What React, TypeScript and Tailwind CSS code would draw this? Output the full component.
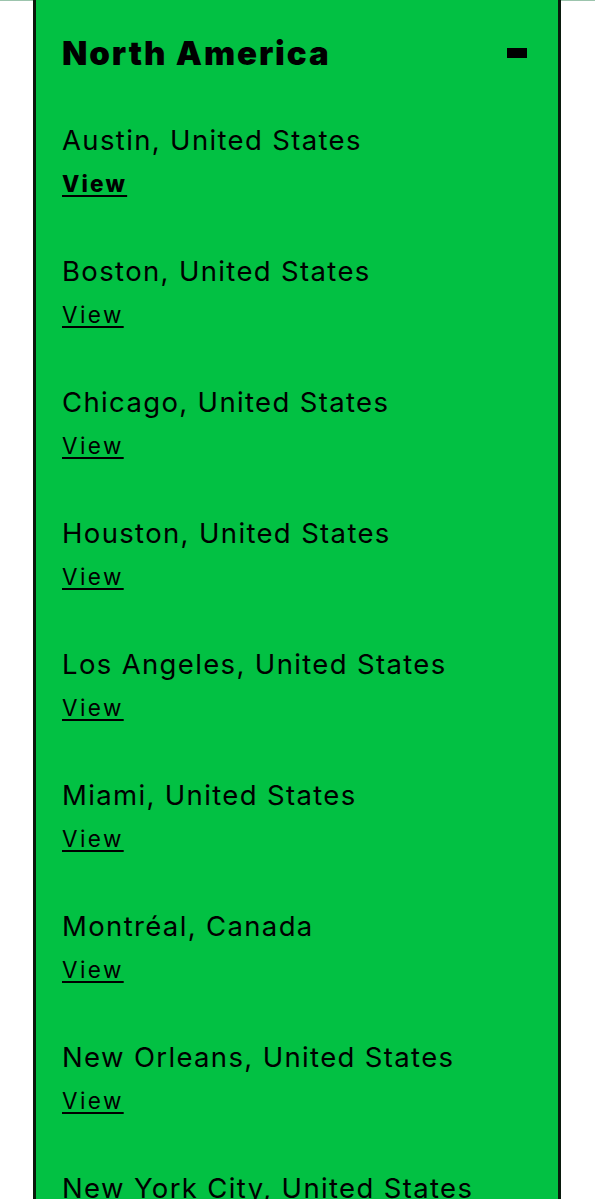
const cities = [
  'Austin, United States',
  'Boston, United States',
  'Chicago, United States',
  'Houston, United States',
  'Los Angeles, United States',
  'Miami, United States',
  'Montréal, Canada',
  'New Orleans, United States',
  'New York City, United States',
]

export default function App() {
  return (
    <div className="min-h-screen bg-white flex font-['Inter',sans-serif] text-black overflow-hidden">
      <div className="w-[33px] border-t border-[#9cc4ad]" />
      <div className="w-[528px] min-h-[1199px] bg-[#02c143] border-x-[3px] border-[#0a1a0c] pl-[26px] pr-[31px] pt-[33px]">
        <div className="flex items-center justify-between">
          <h2 className="text-[33px] leading-[40px] font-black tracking-[1.9px]">North America</h2>
          <div className="w-[20px] h-[10px] bg-black" />
        </div>
        <ul className="mt-[50px]">
          {cities.map((city, i) => (
            <li key={city} className="h-[131px]">
              <div className="text-[27.5px] leading-[34px] font-normal tracking-[1.35px]">{city}</div>
              <a
                href="#"
                className={`block w-fit mt-[12px] text-[22.5px] leading-[30px] underline underline-offset-[3px] ${
                  i === 0 ? 'font-extrabold tracking-[2.2px]' : 'font-normal tracking-[2.4px]'
                }`}
              >
                View
              </a>
            </li>
          ))}
        </ul>
      </div>
      <div className="flex-1 border-t border-[#9cc4ad]" />
    </div>
  )
}
